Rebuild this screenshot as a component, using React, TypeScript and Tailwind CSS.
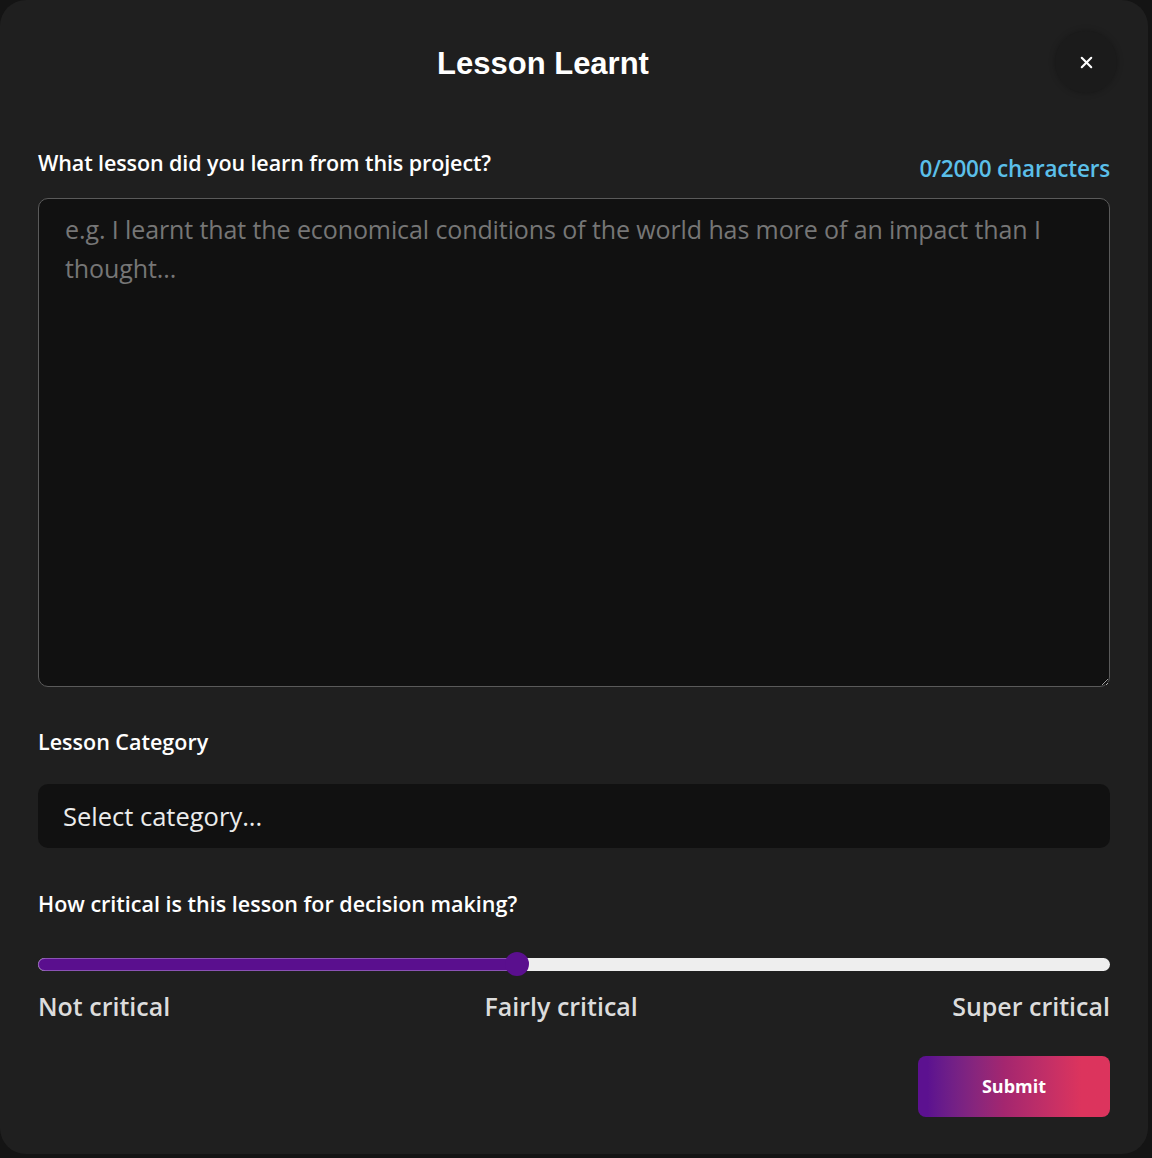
import React from "react"
import { X } from "lucide-react"

const font = { fontFamily: "'Open Sans', Lato, sans-serif" }

const App = () => {
  return (
    <div className="w-[1152px] h-[1158px] bg-[#141414] overflow-hidden" style={font}>
      <div className="w-[1148px] h-[1154px] rounded-[26px] bg-[#1f1f1f] px-[38px] pt-[31px]">
        <div className="flex items-center h-[62px]">
          <div className="flex-1 flex justify-center">
            <h1 className="mt-[3px] text-[31px] leading-[36px] font-bold text-white" style={{ fontFamily: "'Liberation Sans', Arial, sans-serif" }}>
              Lesson Learnt
            </h1>
          </div>
          <button className="ml-[7px] mr-[-7px] w-[62px] h-[62px] rounded-full bg-[#1b1b1b] shadow-[0_0_6px_rgba(0,0,0,0.25)] flex items-center justify-center text-white">
            <X className="w-[19px] h-[19px]" strokeWidth={2.6} />
          </button>
        </div>

        <div className="mt-[56px] flex justify-between items-start">
          <label className="text-[21.5px] leading-[28px] font-semibold tracking-[-0.1px] text-white">
            What lesson did you learn from this project?
          </label>
          <span className="mt-[6px] text-[22.5px] leading-[28px] font-semibold tracking-[-0.2px] text-[#5bbfe9]">0/2000 characters</span>
        </div>

        <textarea
          className="mt-[15px] block w-full h-[489px] rounded-[10px] border border-[#5a5a5a] bg-[#111111] pl-[26px] pr-[40px] py-[11px] text-[25px] leading-[39px] tracking-[-0.1px] text-[#e5e5e5] placeholder:text-[#767676] outline-none"
          style={{ ...font, colorScheme: "dark" }}
          placeholder="e.g. I learnt that the economical conditions of the world has more of an impact than I thought..."
        />

        <div className="mt-[41px] text-[21.5px] leading-[28px] font-semibold text-white">Lesson Category</div>

        <div className="mt-[28px] h-[64px] rounded-[10px] bg-[#111111] px-[25px] flex items-center">
          <span className="text-[25.5px] font-medium text-[#ececec]">Select category...</span>
        </div>

        <div className="mt-[42px] text-[21.5px] leading-[28px] font-semibold text-white">
          How critical is this lesson for decision making?
        </div>

        <div className="relative mt-[34px] h-[24px]">
          <div className="absolute left-0 right-0 top-[6px] h-[13px] rounded-full bg-[#eeeeee]" />
          <div className="absolute left-0 top-[6px] h-[13px] w-[480px] rounded-full bg-[#5a0f8e] border border-[#8a52b4]" />
          <div className="absolute left-[467px] top-0 w-[24px] h-[24px] rounded-full bg-[#5a0f8e]" />
        </div>

        <div className="mt-[14px] flex justify-between text-[25px] leading-[32px] font-semibold text-[#dcdcdc]">
          <span>Not critical</span>
          <span>Fairly critical</span>
          <span>Super critical</span>
        </div>

        <div className="mt-[34px] flex justify-end">
          <button className="w-[192px] h-[61px] rounded-[8px] bg-gradient-to-r from-[#5c1190] from-5% via-[#a4266f] via-45% to-[#dc345d] to-85% text-[18px] font-bold text-white">
            Submit
          </button>
        </div>
      </div>
    </div>
  )
}

export default App
